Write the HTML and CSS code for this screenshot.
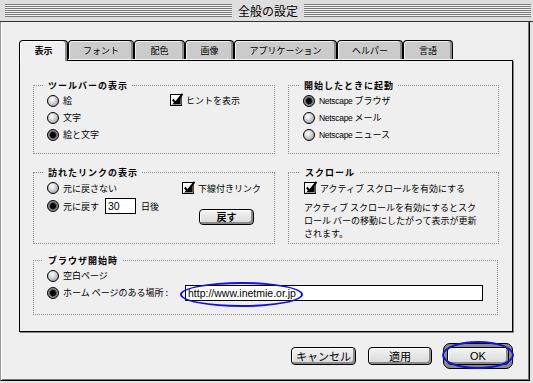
FILE: index.html
```html
<!DOCTYPE html>
<html lang="ja">
<head>
<meta charset="utf-8">
<link rel="stylesheet" href="styles.css">
</head>
<body>
<div class="window">
  <div class="titlebar">
    <div class="stripes"></div>
    <span class="title">全般の設定</span>
    <div class="stripes"></div>
  </div>
  <div class="content">
    <div class="tabs">
      <div class="tab t1 active">表示</div>
      <div class="tab t2">フォント</div>
      <div class="tab t3">配色</div>
      <div class="tab t4">画像</div>
      <div class="tab t5">アプリケーション</div>
      <div class="tab t6">ヘルパー</div>
      <div class="tab t7">言語</div>
    </div>
    <div class="panel">
      <div class="grow">
        <div class="group g1">
          <div class="gtitle">ツールバーの表示</div>
          <div class="gbody">
            <div class="col c1">
              <div class="opt"><span class="radio"></span>絵</div>
              <div class="opt"><span class="radio"></span>文字</div>
              <div class="opt"><span class="radio on"></span>絵と文字</div>
            </div>
            <div class="col">
              <div class="opt"><svg class="check" width="14" height="13" viewBox="0 0 14 13"><rect x="0.5" y="1.5" width="11" height="11" fill="#f4f4f4" stroke="#000"/><path d="M2 3v8.5M2 3h9" stroke="#fff"/><path d="M11 3v8.5H2" stroke="#999"/><path d="M2.8 6.5L5.5 9.8L12.5 0.8" stroke="#000" stroke-width="2" fill="none"/></svg>ヒントを表示</div>
            </div>
          </div>
        </div>
        <div class="group g2">
          <div class="gtitle">開始したときに起動</div>
          <div class="gbody">
            <div class="col">
              <div class="opt"><span class="radio on"></span><span class="lat">Netscape</span>&nbsp;ブラウザ</div>
              <div class="opt"><span class="radio"></span><span class="lat">Netscape</span>&nbsp;メール</div>
              <div class="opt"><span class="radio"></span><span class="lat">Netscape</span>&nbsp;ニュース</div>
            </div>
          </div>
        </div>
      </div>
      <div class="grow second">
        <div class="group g3">
          <div class="gtitle">訪れたリンクの表示</div>
          <div class="gbody">
            <div class="col c3">
              <div class="opt r18"><span class="radio"></span>元に戻さない</div>
              <div class="opt r18"><span class="radio on"></span>元に戻す<span class="field days">30</span><span class="after">日後</span></div>
            </div>
            <div class="col">
              <div class="opt r18"><svg class="check" width="14" height="13" viewBox="0 0 14 13"><rect x="0.5" y="1.5" width="11" height="11" fill="#f4f4f4" stroke="#000"/><path d="M2 3v8.5M2 3h9" stroke="#fff"/><path d="M11 3v8.5H2" stroke="#999"/><path d="M2.8 6.5L5.5 9.8L12.5 0.8" stroke="#000" stroke-width="2" fill="none"/></svg>下線付きリンク</div>
              <div class="btn small">戻す</div>
            </div>
          </div>
        </div>
        <div class="group g4">
          <div class="gtitle">スクロール</div>
          <div class="opt r18"><svg class="check" width="14" height="13" viewBox="0 0 14 13"><rect x="0.5" y="1.5" width="11" height="11" fill="#f4f4f4" stroke="#000"/><path d="M2 3v8.5M2 3h9" stroke="#fff"/><path d="M11 3v8.5H2" stroke="#999"/><path d="M2.8 6.5L5.5 9.8L12.5 0.8" stroke="#000" stroke-width="2" fill="none"/></svg>アクティブ スクロールを有効にする</div>
          <p class="desc">アクティブ スクロールを有効にするとスク<br>ロール バーの移動にしたがって表示が更新<br>されます。</p>
        </div>
      </div>
      <div class="group g5">
        <div class="gtitle">ブラウザ開始時</div>
        <div class="opt"><span class="radio"></span>空白ページ</div>
        <div class="opt"><span class="lbl"><span class="radio on"></span>ホーム ページのある場所 :</span><span class="field url">http://www.inetmie.or.jp</span></div>
      </div>
    </div>
    <div class="buttons">
      <div class="btn cancel">キャンセル</div>
      <div class="btn apply">適用</div>
      <div class="defring"><div class="btn ok">OK</div></div>
    </div>
  </div>
  <div class="mark m-tab"></div>
  <div class="mark m-url"></div>
  <div class="mark m-ok"></div>
</div>
</body>
</html>
```

FILE: styles.css
```css
* { box-sizing: border-box; }
html, body { margin: 0; padding: 0; }
body {
  background: #e4e4e4;
  font-family: "Noto Sans CJK JP", "Noto Sans", sans-serif;
  font-size: 9px;
  color: #000;
}
.window {
  position: relative;
  width: 533px;
  height: 383px;
  display: flex;
  flex-direction: column;
}
.titlebar {
  height: 22px;
  flex: none;
  background: #dedede;
  border-bottom: 1px solid #333;
  display: flex;
  align-items: flex-start;
  padding: 4px 2px 0 5px;
  gap: 6px;
}
.stripes {
  flex: 1;
  height: 13px;
  background: repeating-linear-gradient(to bottom, #7a7a7a 0 1px, #f2f2f2 1px 2px);
  border-bottom: 1px solid #7a7a7a;
}
.title {
  font-size: 12px;
  line-height: 14px;
}
.content {
  flex: 1;
  background: #efefef;
  border-left: 1px solid #999;
  border-right: 1px solid #000;
  border-bottom: 1px solid #000;
  margin-right: 3px;
  margin-bottom: 2px;
  box-shadow: inset 1px 0 0 #fff, inset -1px 0 0 #777, inset 0 -1px 0 #777;
  padding: 18px 0 0 18px;
}
.tabs {
  display: flex;
  align-items: flex-end;
  height: 21px;
  margin-bottom: -1px;
  position: relative;
  z-index: 1;
}
.tab {
  height: 19px;
  margin-bottom: 2px;
  background: #cbcbcb;
  border: 1px solid #000;
  border-bottom: none;
  border-radius: 4px 4px 0 0;
  box-shadow: inset -2px 0 0 #8a8a8a, inset 1px 1px 0 #f0f0f0;
  display: flex;
  align-items: center;
  justify-content: center;
  line-height: 1;
  padding-top: 1px;
}
.tab.active {
  height: 21px;
  margin-bottom: 0;
  background: #efefef;
  font-weight: bold;
  box-shadow: inset -2px 0 0 #8a8a8a, inset 1px 1px 0 #fff;
  padding-bottom: 2px;
}
.t1 { width: 49px; }
.t2 { width: 66px; }
.t3 { width: 51px; }
.t4 { width: 49px; }
.t5 { width: 103px; }
.t6 { width: 66px; }
.t7 { width: 50px; }
.panel {
  width: 494px;
  height: 272px;
  border: 1px solid #000;
  box-shadow: 1px 1px 0 #888;
  background: #efefef;
  padding: 24px 0 0 13px;
}
.grow {
  display: flex;
  gap: 13px;
}
.grow.second { margin-top: 18px; }
.group {
  border: 1px dotted #8a8a8a;
  padding: 0 0 0 13px;
}
.gtitle {
  display: block;
  width: fit-content;
  height: 13px;
  line-height: 13px;
  margin: -7px 0 0 -4px;
  padding: 0 4px 0 5px;
  background: #efefef;
  font-weight: bold;
  letter-spacing: 1px;
}
.gbody { display: flex; }
.g1 { width: 242px; height: 69px; }
.g2 { width: 211px; height: 69px; padding-left: 14px; }
.g3 { width: 242px; height: 72px; }
.g4 { width: 211px; height: 72px; padding-left: 15px; }
.g5 { width: 465px; height: 55px; margin-top: 16px; }
.c1 { width: 123px; }
.c3 { width: 135px; }
.opt {
  display: flex;
  align-items: center;
  height: 17px;
  white-space: nowrap;
}
.r18 { height: 18px; }
.radio {
  width: 12px;
  height: 12px;
  border-radius: 50%;
  border: 1px solid #000;
  background: radial-gradient(circle at 40% 35%, #ffffff 0, #e8e8e8 25%, #a8a8a8 75%, #7a7a7a 100%);
  margin-right: 4px;
  flex: none;
}
.radio.on {
  background: radial-gradient(circle at 50% 50%, #000 0 2.6px, #3a3a3a 3px, #9a9a9a 4.5px, #6a6a6a 5.5px);
}
.check { flex: none; margin-right: 2px; margin-top: -2px; }
.lat {
  font-family: "Liberation Sans", sans-serif;
  font-size: 8.5px;
  letter-spacing: -0.3px;
}
.field {
  background: #fff;
  border: 1px solid #000;
  height: 16px;
  display: flex;
  align-items: center;
  font-family: "Liberation Sans", sans-serif;
  font-size: 10.5px;
  padding-left: 2px;
}
.days { width: 31px; margin-left: 6px; }
.after { margin-left: 5px; }
.lbl { display: flex; align-items: center; width: 138px; }
.url { width: 298px; }
.btn {
  display: flex;
  align-items: center;
  justify-content: center;
  border: 1px solid #000;
  border-radius: 4px;
  background: linear-gradient(#f4f4f4, #d8d8d8);
  box-shadow: inset -2px -2px 0 #8a8a8a, inset 1px 1px 0 #fff;
  font-size: 10px;
  line-height: 1;
}
.btn.small {
  width: 55px;
  height: 16px;
  margin: 12px 0 0 17px;
  font-weight: bold;
}
.buttons {
  width: 494px;
  display: flex;
  justify-content: flex-end;
  align-items: center;
  height: 26px;
  margin-top: 11px;
}
.cancel { width: 65px; height: 18px; margin-right: 12px; font-size: 11px; }
.apply { width: 64px; height: 18px; margin-right: 11px; font-size: 11px; }
.defring {
  width: 70px;
  height: 26px;
  border: 1px solid #000;
  border-radius: 7px;
  background: #8a8a8a;
  padding: 3px;
}
.ok { width: 100%; height: 100%; font-family: "Liberation Sans", sans-serif; font-size: 11px; }
.desc {
  margin: 4px 0 0 0;
  line-height: 13px;
  white-space: nowrap;
}
.mark {
  position: absolute;
  border: 2px solid #1010e0;
  border-radius: 50%;
}
.m-tab { left: 20px; top: 41px; width: 47px; height: 20px; }
.m-url { left: 180px; top: 282px; width: 123px; height: 25px; }
.m-ok { left: 442px; top: 341px; width: 72px; height: 28px; }
```
